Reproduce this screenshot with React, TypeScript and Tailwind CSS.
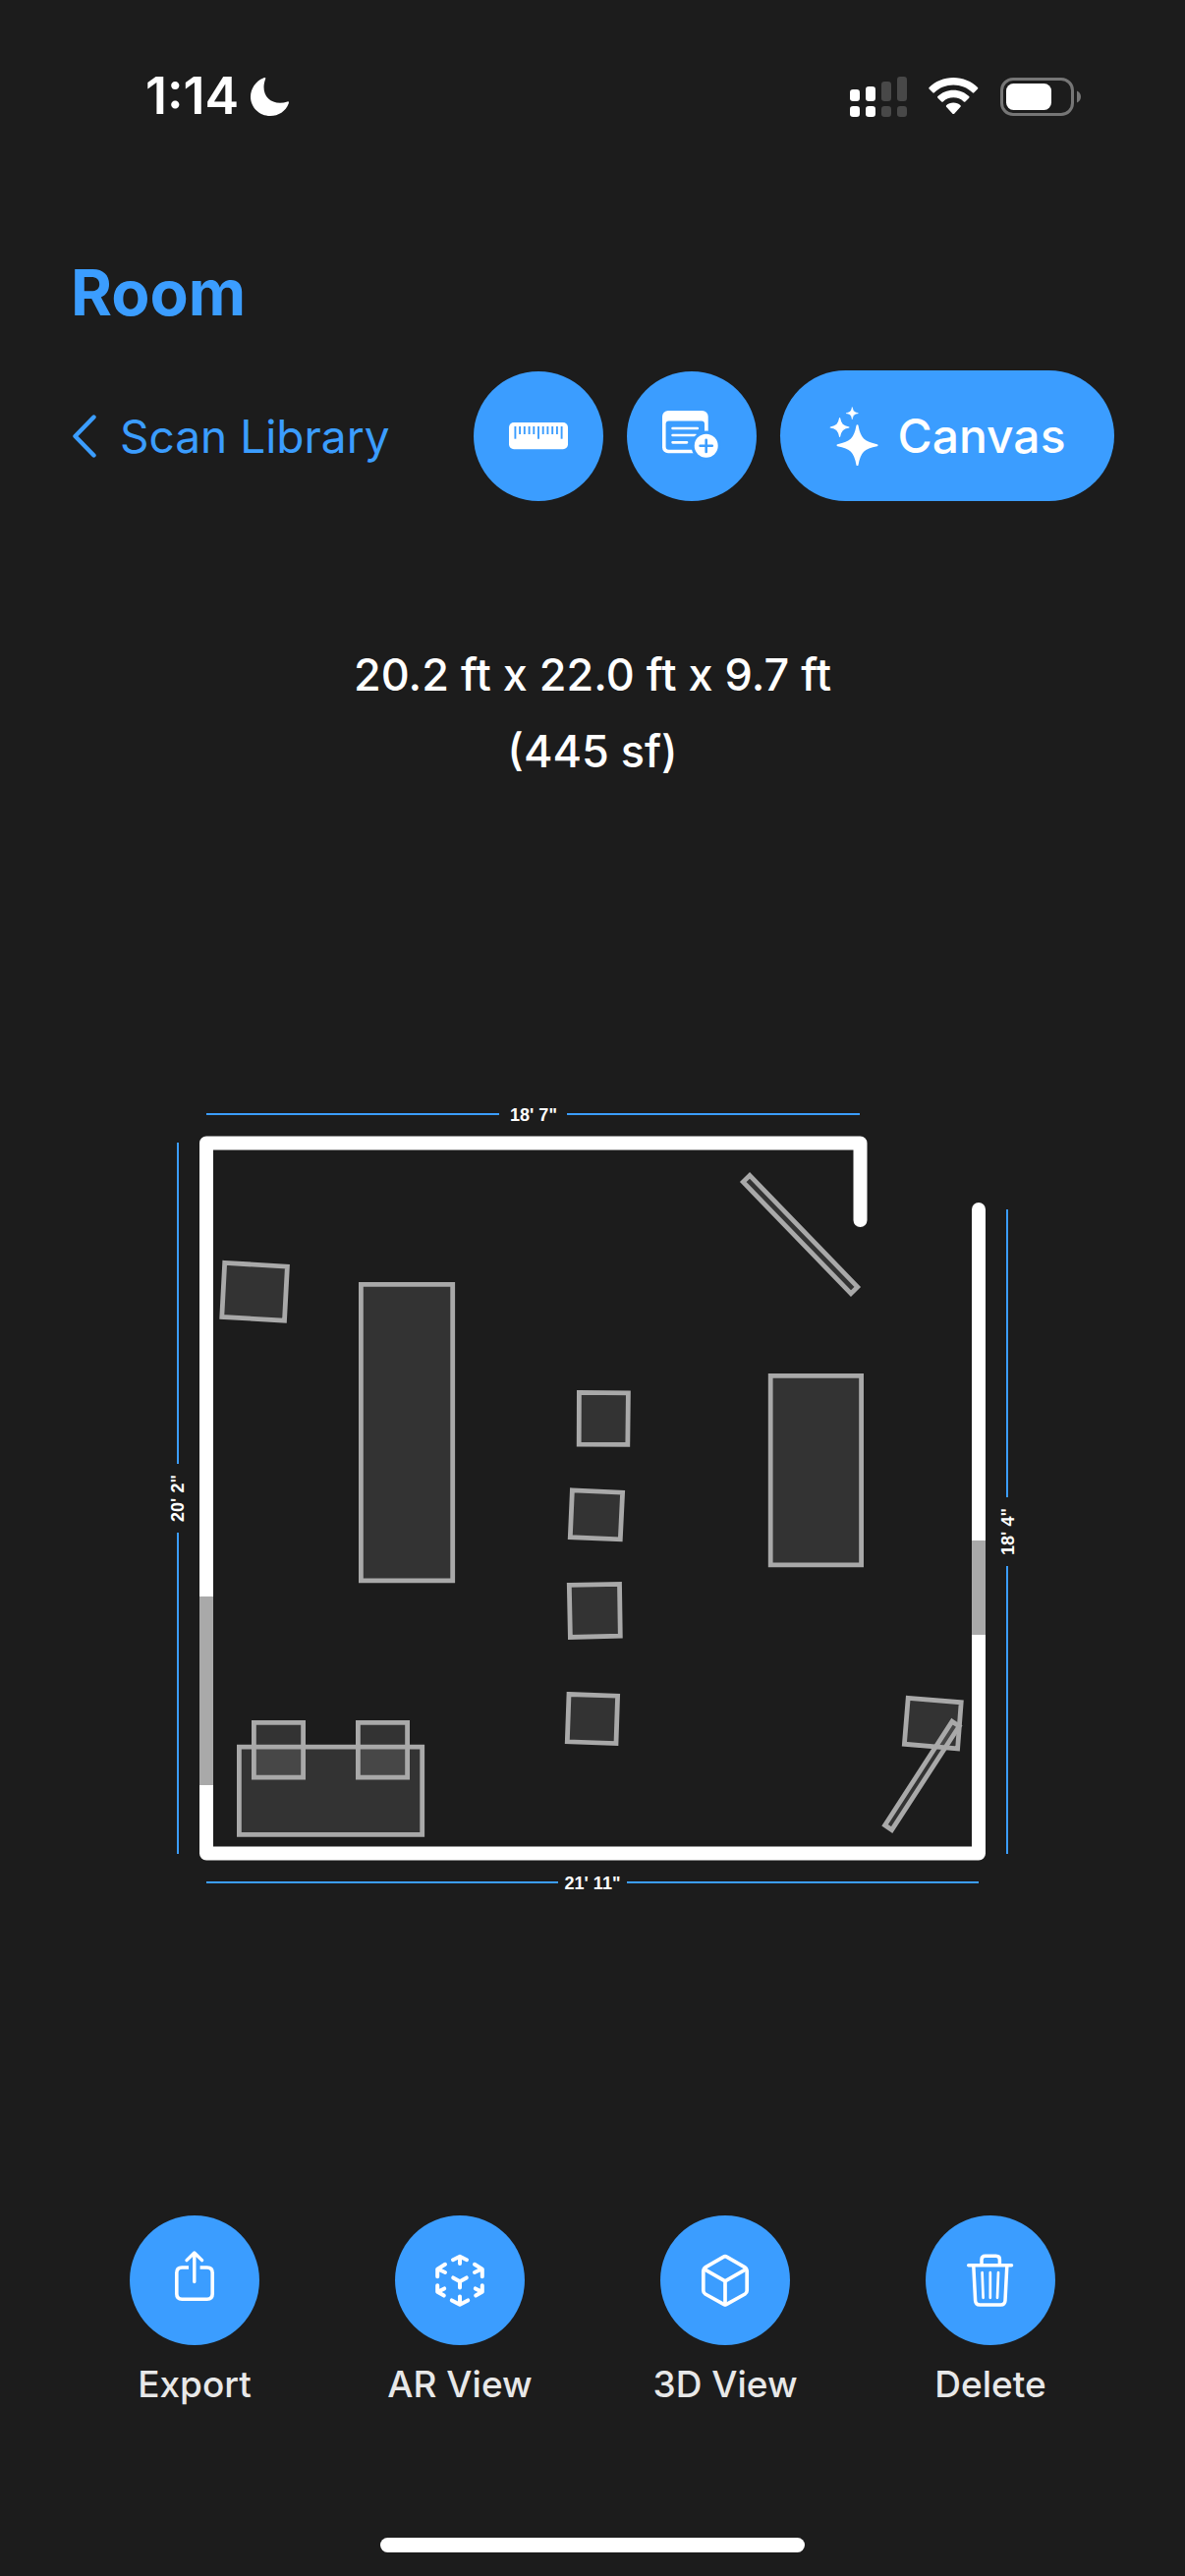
import type { ReactNode } from "react";

const stroke = {
  fill: "none",
  stroke: "currentColor",
  strokeLinecap: "round",
  strokeLinejoin: "round",
} as const;

function Glyph({ children }: { children: ReactNode }) {
  return (
    <svg viewBox="0 0 132 132" className="size-full" aria-hidden="true">
      {children}
    </svg>
  );
}

function RulerIcon() {
  const ticks = [42.4, 47.1, 51.8, 56.6, 61.3, 66, 70.7, 75.4, 80.2, 84.9, 89.6];
  return (
    <Glyph>
      <rect x="36" y="52" width="60" height="27.3" rx="5" fill="currentColor" />
      {ticks.map((x, i) => (
        <path key={x} d={`M${x} 56V${i % 5 === 0 ? 68.7 : 64}`} stroke="#3b9dff" strokeWidth="1.9" />
      ))}
    </Glyph>
  );
}

function NoteIcon() {
  return (
    <Glyph>
      <rect x="36" y="40" width="46.7" height="43.3" rx="6" fill="currentColor" />
      <rect x="39.6" y="50.6" width="39.4" height="29.2" rx="3" fill="#3b9dff" />
      <path d="M46.6 58H71.8M46.6 65H70M46.6 72.3H61" {...stroke} strokeWidth="2.7" />
      <circle cx="80.7" cy="75.8" r="15.2" fill="#3b9dff" />
      <circle cx="80.7" cy="75.8" r="12" fill="currentColor" />
      <path d="M74.6 75.8H86.8M80.7 69.7V81.9" {...stroke} stroke="#3b9dff" strokeWidth="2.6" />
    </Glyph>
  );
}

function ExportIcon() {
  return (
    <Glyph>
      <path
        d="M60 53H53.2Q47.8 53 47.8 58.4V79.8Q47.8 85.2 53.2 85.2H78.8Q84.2 85.2 84.2 79.8V58.4Q84.2 53 78.8 53H71.6"
        {...stroke}
        strokeLinecap="butt"
        strokeWidth="3.6"
      />
      <path d="M65.8 67.6V39M58 45.6L65.8 38L73.6 45.6" {...stroke} strokeWidth="3.4" />
    </Glyph>
  );
}

function ArIcon() {
  return (
    <Glyph>
      <g {...stroke} strokeWidth="4">
        <path d="M59 45.2L66 41.8L73 45.2M66 42.5V49" />
        <path d="M51 49.8L43.2 54.6V62.2M44.2 54.8L51 58" />
        <path d="M81 49.8L88.8 54.6V62.2M87.8 54.8L81 58" />
        <path d="M43.2 71.2V77.8L49.8 81.6M44.2 77.6L50.2 74.4" />
        <path d="M88.8 71.2V77.8L82.2 81.6M87.8 77.6L81.8 74.4" />
        <path d="M59.2 63.4L66 67.2L72.8 63.4M66 67.2V73.6" />
        <path d="M57.8 86.4L66 90.8L74.2 86.4M66 82.6V90" />
      </g>
    </Glyph>
  );
}

function CubeIcon() {
  return (
    <Glyph>
      <g {...stroke} strokeWidth="3.7">
        <path d="M64 42.3Q66 41.1 68 42.3L86.2 52.8Q88.2 54 88.2 56.2V76.6Q88.2 78.8 86.2 80L68 90.2Q66 91.4 64 90.2L45.8 80Q43.8 78.8 43.8 76.6V56.2Q43.8 54 45.8 52.8Z" />
        <path d="M44.6 54.6L66 66.8L87.4 54.6M66 66.8V90.6" />
      </g>
    </Glyph>
  );
}

function TrashIcon() {
  return (
    <Glyph>
      <g {...stroke} strokeWidth="3.5">
        <path d="M43.7 50.7H87.5" />
        <path d="M57 50V45Q57 41.2 60.8 41.2H71.6Q75.4 41.2 75.4 45V50" />
        <path d="M48.8 51.5L50.6 86.6Q50.9 91 55.2 91H76.4Q80.7 91 81 86.6L82.8 51.5" />
        <path d="M57.6 58.2L58.6 83.8M65.8 58.2V83.8M74 58.2L73 83.8" strokeWidth="2.7" />
      </g>
    </Glyph>
  );
}

function SparklesIcon() {
  const star = "M0 -20C2.4 -6.6 6.6 -2.4 20 0C6.6 2.4 2.4 6.6 0 20C-2.4 6.6 -6.6 2.4 -20 0C-6.6 -2.4 -2.4 -6.6 0 -20Z";
  return (
    <svg viewBox="0 0 50 60" className="h-[60px] w-[50px] shrink-0" aria-hidden="true">
      <g fill="currentColor" stroke="currentColor" strokeLinejoin="round">
        <path d={star} strokeWidth="2" transform="translate(28.5 39.2)" />
        <path d={star} strokeWidth="2.4" transform="translate(10.6 21) scale(.47)" />
        <path d={star} strokeWidth="2.4" transform="translate(23.3 6.6) scale(.3)" />
      </g>
    </svg>
  );
}

function StatusBar() {
  return (
    <div className="flex h-[60px] items-center justify-between pr-[106px] pl-[148px] text-white">
      <div className="flex items-center gap-3">
        <span className="text-[52px] leading-[60px] font-semibold">1:14</span>
        <svg viewBox="0 0 39 39" className="size-[39px]" aria-hidden="true">
          <path
            fill="currentColor"
            d="M15.2 1.2C12 9.5 13.6 17 18 21.2C22.5 25.6 30 27 37.6 24.4C39 24 39.2 25 38.7 26.4C35.8 34 28.5 39 20 39C9 39 0 30.3 0 19.5C0 11 5.3 3.5 13 .4C14.8 -.3 15.7 0 15.2 1.2Z"
          />
        </svg>
      </div>
      <div className="flex items-center gap-[22px]">
        <svg viewBox="0 0 58 41" className="h-[41px] w-[58px]" aria-hidden="true">
          <g fill="currentColor">
            <rect y="13" width="10" height="12" rx="3.2" />
            <rect x="16" y="10" width="10" height="15" rx="3.2" />
            <rect y="30" width="10" height="11" rx="3.2" />
            <rect x="16" y="30" width="10" height="11" rx="3.2" />
          </g>
          <g fill="#484848">
            <rect x="32" y="5" width="10" height="20" rx="3.2" />
            <rect x="48" width="10" height="25" rx="3.2" />
            <rect x="32" y="30" width="10" height="11" rx="3.2" />
            <rect x="48" y="30" width="10" height="11" rx="3.2" />
          </g>
        </svg>
        <svg viewBox="0 0 51 38" className="h-[38px] w-[51px]" aria-hidden="true">
          <g fill="currentColor">
            <path d="M25.3 0C35 0 43.7 3.8 50 10Q50.7 10.8 50 11.6L46.3 15.3Q45.5 16 44.7 15.3C39.5 10.4 32.8 7.6 25.3 7.6S11.1 10.4 5.9 15.3Q5.1 16 4.3 15.3L.6 11.6Q-.1 10.8 .6 10C6.9 3.8 15.6 0 25.3 0Z" />
            <path d="M25.3 12.8C31.6 12.8 37 15.2 41.2 19.1Q42 19.9 41.2 20.7L37.4 24.4Q36.6 25.1 35.8 24.4C33 21.8 29.3 20.3 25.3 20.3S17.6 21.8 14.8 24.4Q14 25.1 13.2 24.4L9.4 20.7Q8.6 19.9 9.4 19.1C13.6 15.2 19 12.8 25.3 12.8Z" />
            <path d="M25.3 25.6C28.2 25.6 30.7 26.7 32.5 28.3Q33.2 29 32.5 29.8L26.2 36.7Q25.3 37.5 24.4 36.7L18.1 29.8Q17.4 29 18.1 28.3C19.9 26.7 22.4 25.6 25.3 25.6Z" />
          </g>
        </svg>
        <svg viewBox="0 0 82 39" className="h-[39px] w-[82px]" aria-hidden="true">
          <rect x="1.5" y="1.5" width="72" height="36" rx="11.5" fill="none" stroke="#767676" strokeWidth="3" />
          <rect x="6" y="6" width="46" height="27" rx="7.5" fill="currentColor" />
          <path d="M78 13.5C80.4 14.5 82 16.8 82 19.5S80.4 24.5 78 25.5Z" fill="#767676" />
        </svg>
      </div>
    </div>
  );
}

const furniture = [
  "228.7,1285.3 292.4,1289.2 289.5,1344.2 225.8,1340.4",
  "367.4,1307.4 460.7,1307.4 460.7,1608.8 367.4,1608.8",
  "589.4,1417.4 639.4,1417.8 638.8,1470.4 589.2,1470.2",
  "582.4,1516.8 633.6,1519.2 631.3,1566.8 580.3,1564.6",
  "579.3,1613.3 630.5,1612.4 631.3,1665.2 580.4,1666.5",
  "579,1724.5 628.6,1726.2 627,1774.6 577.3,1772.8",
  "784.2,1400.3 876.6,1400.3 876.6,1592.8 784.2,1592.8",
  "763,1196.4 756.3,1203.1 866,1316.6 872.7,1309.9",
  "243.4,1778.2 429.7,1778.2 429.7,1867.3 243.4,1867.3",
  "258.4,1753.4 308.6,1753.4 308.6,1809.2 258.4,1809.2",
  "364.4,1753.4 414.6,1753.4 414.6,1809.2 364.4,1809.2",
  "924.2,1728.4 978.2,1732.8 974.6,1780 920.4,1775.2",
  "969,1752.2 976.2,1757 907.6,1862.6 900.6,1857.8",
];

function FloorPlan() {
  return (
    <svg viewBox="0 1110 1206 840" className="w-full" role="img" aria-label="Floor plan">
      <path
        d="M210 1134H508M577 1134H875M210 1916H568M638 1916H996M181 1163V1490M181 1560V1887M1025 1231V1524M1025 1594V1887"
        fill="none"
        stroke="#3b9dff"
        strokeWidth="2"
      />
      <path d="M875.5 1242V1163.5H210V1886.5H996V1231" {...stroke} stroke="#fff" strokeWidth="14" />
      <path d="M210 1625V1817M996 1568V1664" fill="none" stroke="#a9a9a9" strokeWidth="14" />
      <g fill="#fff" fillOpacity=".1">
        {furniture.map((p) => (
          <polygon key={p} points={p} />
        ))}
      </g>
      <g fill="none" stroke="#a9a9a9" strokeWidth="4.8">
        {furniture.map((p) => (
          <polygon key={p} points={p} />
        ))}
      </g>
      <g
        className="font-['Liberation_Sans',Arial,sans-serif] text-[18px] font-bold"
        fill="#fff"
        textAnchor="middle"
      >
        <text x="543" y="1141">18' 7"</text>
        <text x="603" y="1923">21' 11"</text>
        <text transform="translate(187 1525) rotate(-90)">20' 2"</text>
        <text transform="translate(1032 1559) rotate(-90)">18' 4"</text>
      </g>
    </svg>
  );
}

const round = "size-[132px] shrink-0 rounded-full bg-[#3b9dff] text-white";

const actions = [
  { label: "Export", icon: <ExportIcon /> },
  { label: "AR View", icon: <ArIcon /> },
  { label: "3D View", icon: <CubeIcon /> },
  { label: "Delete", icon: <TrashIcon /> },
];

export default function App() {
  return (
    <div className="flex min-h-screen flex-col bg-[#1c1c1c] pt-[68px] pb-6 font-['Inter',sans-serif]">
      <StatusBar />

      <header className="mt-[130px] px-[72px]">
        <h1 className="text-[64px] leading-[80px] font-bold text-[#3b9dff]">Room</h1>
        <nav className="mt-[39px] flex items-center justify-between">
          <a href="#library" className="flex items-center gap-6 text-[46px] leading-[60px] text-[#3b9dff]">
            <svg viewBox="0 0 26 44" className="h-[44px] w-[26px]" aria-hidden="true">
              <path d="M23.5 2.5L4.5 22L23.5 41.5" {...stroke} strokeWidth="4.4" />
            </svg>
            Scan Library
          </a>
          <div className="flex items-center gap-6">
            <button type="button" aria-label="Measurements" className={round}>
              <RulerIcon />
            </button>
            <button type="button" aria-label="Add note" className={round}>
              <NoteIcon />
            </button>
            <button
              type="button"
              className="flex h-[133px] w-[340px] items-center justify-center gap-5 rounded-[68px] bg-[#3b9dff] text-[48px] leading-[60px] font-medium text-white"
            >
              <SparklesIcon />
              Canvas
            </button>
          </div>
        </nav>
      </header>

      <p className="mt-[138px] text-center text-[45px] leading-[78px] font-medium text-white">
        20.2 ft x 22.0 ft x 9.7 ft
        <br />
        (445 sf)
      </p>

      <main className="flex flex-1 items-center">
        <FloorPlan />
      </main>

      <footer className="grid grid-cols-4 px-[63px]">
        {actions.map(({ label, icon }) => (
          <button key={label} type="button" className="flex flex-col items-center gap-4">
            <span className={round}>{icon}</span>
            <span className="text-[37px] leading-[48px] font-medium text-[#e8e8e8]">{label}</span>
          </button>
        ))}
      </footer>

      <div className="mx-auto mt-[132px] h-[15px] w-[432px] rounded-full bg-white" />
    </div>
  );
}
